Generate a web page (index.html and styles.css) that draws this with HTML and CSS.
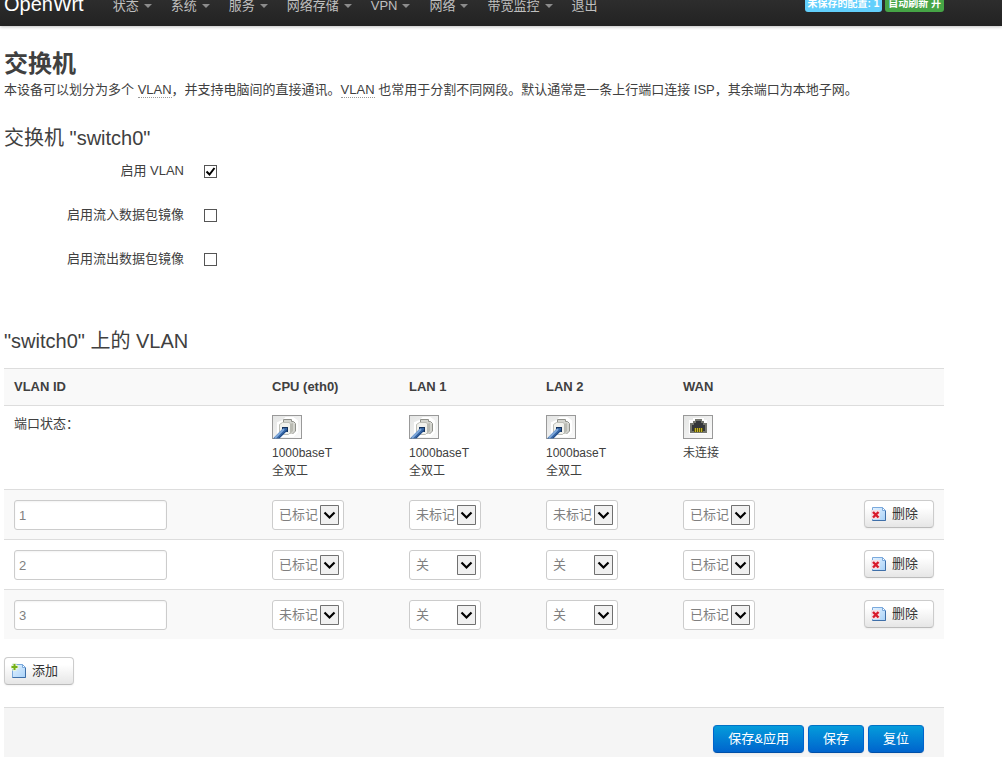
FILE: index.html
```html
<!DOCTYPE html>
<html lang="zh-CN">

<head>
  <meta charset="utf-8">
  <title>OpenWrt - 交换机</title>
  <link rel="stylesheet" href="styles.css">
</head>

<body>
  <svg class="sprite" width="0" height="0" aria-hidden="true">
    <defs>
      <linearGradient id="plate" x1="0" y1="0" x2="1" y2="1">
        <stop offset="0" stop-color="#e4e5e4" />
        <stop offset="1" stop-color="#fafafa" />
      </linearGradient>
      <linearGradient id="sheet" x1="0" y1="0" x2="1" y2="1">
        <stop offset="0" stop-color="#e4f2ff" />
        <stop offset="1" stop-color="#a9d2f8" />
      </linearGradient>
    </defs>
    <symbol id="port-up" viewBox="0 0 30 24">
      <rect x=".5" y=".5" width="29" height="23" fill="url(#plate)" stroke="#999" />
      <path d="M11 6l3-3h7l4 3v11l-4 4H9l-3-3V8z" fill="#fff" stroke="#fff" stroke-width="2" />
      <path d="M12 7V5h7l1 2h2l1 2v7l-3 3h-3z" fill="#d3d4ce" />
      <path d="M11.500 7V4.500h8v2h2l2 2V16l-3 3" fill="none" stroke="#8f908a" />
      <path d="M7.500 9.500l3-2h7l1 2v8l-2 2h-7l-2-2z" fill="#f1f1ec" stroke="#bdbeb7" />
      <path d="M18 9l3-1v8l-3 3z" fill="#b9bab2" />
      <rect x="10" y="12" width="6" height="5" fill="#14325c" />
      <path d="M1 23.500l9-9 2-1.500h3v3l-7.500 7.500z" fill="#3465a4" />
      <path d="M3 23l9-9" stroke="#7fa8da" stroke-width="2" />
      <path d="M7 23l8-8" stroke="#204a87" />
    </symbol>
    <symbol id="port-down" viewBox="0 0 30 24">
      <rect x=".5" y=".5" width="29" height="23" fill="url(#plate)" stroke="#999" />
      <path d="M6 5h4V3h11v2h3v14H6z" fill="#fff" />
      <path d="M7 8h3V6h2V4h7v2h2v2h3v10H7z" fill="#74766e" />
      <path d="M9 10h2V8h2V6h5v2h2v2h2v6H9z" fill="#34373a" />
      <path d="M11 13h9v4h-9z" fill="#5c560c" />
      <path d="M12.500 13v4M14.500 13v4M16.500 13v4M18.500 13v4" stroke="#c4b32a" />
    </symbol>
    <symbol id="del" viewBox="0 0 16 16">
      <path d="M1.500 1.500h10l3 3v10h-13z" fill="url(#sheet)" stroke="#7aa9dc" />
      <path d="M1.500 14.500h13v-10" fill="none" stroke="#3f6fa8" />
      <path d="M11.500 1.500v3h3z" fill="#fff" stroke="#7aa9dc" />
      <rect x="0" y="4" width="9" height="9" rx="1" fill="#f3e0e8" />
      <path d="M2 6l5.500 5.500M7.500 6L2 11.500" stroke="#d8192c" stroke-width="2.400" />
    </symbol>
    <symbol id="add" viewBox="0 0 16 16">
      <path d="M1.500 1.500h10l3 3v10h-13z" fill="url(#sheet)" stroke="#7aa9dc" />
      <path d="M1.500 14.500h13v-10" fill="none" stroke="#3f6fa8" />
      <path d="M11.500 1.500v3h3z" fill="#fff" stroke="#7aa9dc" />
      <path d="M3.500 0v8M0 4h7.500" stroke="#e9f5d8" stroke-width="4" />
      <path d="M3.500 1v6M.5 4h6" stroke="#73b017" stroke-width="2" />
    </symbol>
  </svg>

  <header class="topbar">
    <div class="container topbar-inner">
      <a class="brand" href="#">OpenWrt</a>
      <nav class="nav">
        <a class="menu" href="#">状态</a>
        <a class="menu" href="#">系统</a>
        <a class="menu" href="#">服务</a>
        <a class="menu" href="#">网络存储</a>
        <a class="menu" href="#">VPN</a>
        <a class="menu" href="#">网络</a>
        <a class="menu" href="#">带宽监控</a>
        <a href="#">退出</a>
      </nav>
      <div class="indicators">
        <a class="label notice" href="#">未保存的配置: 1</a>
        <a class="label success" href="#">自动刷新 开</a>
      </div>
    </div>
  </header>

  <main class="container">
    <form onsubmit="return false">
      <h2>交换机</h2>
      <p class="descr">本设备可以划分为多个 <abbr>VLAN</abbr>，并支持电脑间的直接通讯。<abbr>VLAN</abbr> 也常用于分割不同网段。默认通常是一条上行端口连接 ISP，其余端口为本地子网。</p>

      <section class="options">
        <h3>交换机 "switch0"</h3>
        <div class="field">
          <label for="enable-vlan">启用 VLAN</label>
          <input type="checkbox" id="enable-vlan" checked>
        </div>
        <div class="field">
          <label for="mirror-rx">启用流入数据包镜像</label>
          <input type="checkbox" id="mirror-rx">
        </div>
        <div class="field">
          <label for="mirror-tx">启用流出数据包镜像</label>
          <input type="checkbox" id="mirror-tx">
        </div>
      </section>

      <section>
        <h3>"switch0" 上的 VLAN</h3>
        <table class="vlans">
          <colgroup>
            <col class="col-id">
            <col class="col-port">
            <col class="col-port">
            <col class="col-port">
            <col class="col-port">
            <col>
          </colgroup>
          <thead>
            <tr>
              <th>VLAN ID</th>
              <th>CPU (eth0)</th>
              <th>LAN 1</th>
              <th>LAN 2</th>
              <th>WAN</th>
              <th></th>
            </tr>
          </thead>
          <tbody>
            <tr class="status">
              <td>端口状态：</td>
              <td><div class="port"><svg><use href="#port-up" /></svg>1000baseT<br>全双工</div></td>
              <td><div class="port"><svg><use href="#port-up" /></svg>1000baseT<br>全双工</div></td>
              <td><div class="port"><svg><use href="#port-up" /></svg>1000baseT<br>全双工</div></td>
              <td><div class="port"><svg><use href="#port-down" /></svg>未连接</div></td>
              <td></td>
            </tr>
            <tr>
              <td><input type="text" value="1" aria-label="VLAN ID"></td>
              <td><select aria-label="CPU (eth0)"><option>关</option><option>未标记</option><option selected>已标记</option></select></td>
              <td><select aria-label="LAN 1"><option>关</option><option selected>未标记</option><option>已标记</option></select></td>
              <td><select aria-label="LAN 2"><option>关</option><option selected>未标记</option><option>已标记</option></select></td>
              <td><select aria-label="WAN"><option>关</option><option>未标记</option><option selected>已标记</option></select></td>
              <td class="remove"><button class="btn" type="button"><svg><use href="#del" /></svg>删除</button></td>
            </tr>
            <tr>
              <td><input type="text" value="2" aria-label="VLAN ID"></td>
              <td><select aria-label="CPU (eth0)"><option>关</option><option>未标记</option><option selected>已标记</option></select></td>
              <td><select aria-label="LAN 1"><option selected>关</option><option>未标记</option><option>已标记</option></select></td>
              <td><select aria-label="LAN 2"><option selected>关</option><option>未标记</option><option>已标记</option></select></td>
              <td><select aria-label="WAN"><option>关</option><option>未标记</option><option selected>已标记</option></select></td>
              <td class="remove"><button class="btn" type="button"><svg><use href="#del" /></svg>删除</button></td>
            </tr>
            <tr>
              <td><input type="text" value="3" aria-label="VLAN ID"></td>
              <td><select aria-label="CPU (eth0)"><option>关</option><option selected>未标记</option><option>已标记</option></select></td>
              <td><select aria-label="LAN 1"><option selected>关</option><option>未标记</option><option>已标记</option></select></td>
              <td><select aria-label="LAN 2"><option selected>关</option><option>未标记</option><option>已标记</option></select></td>
              <td><select aria-label="WAN"><option>关</option><option>未标记</option><option selected>已标记</option></select></td>
              <td class="remove"><button class="btn" type="button"><svg><use href="#del" /></svg>删除</button></td>
            </tr>
          </tbody>
        </table>
        <button class="btn" type="button"><svg><use href="#add" /></svg>添加</button>
      </section>

      <div class="actions">
        <button class="btn primary" type="submit">保存&amp;应用</button>
        <button class="btn primary" type="submit">保存</button>
        <button class="btn primary" type="reset">复位</button>
      </div>
    </form>
  </main>
</body>

</html>
```
FILE: styles.css
```css
* {
  box-sizing: border-box;
}

body {
  margin: 0;
  background: #fff;
  color: #404040;
  font: 13px/18px "Liberation Sans", "Noto Sans CJK SC", sans-serif;
}

h2,
h3,
p {
  margin: 0;
}

input,
select,
button {
  font: inherit;
}

.sprite {
  display: block;
}

.container {
  max-width: 944px;
  padding-left: 4px;
}

/* top bar, partly scrolled out of view */
.topbar {
  height: 40px;
  margin-top: -14px;
  background: linear-gradient(#333, #222);
  box-shadow: 0 1px 3px rgba(0, 0, 0, .25);
}

.topbar-inner {
  display: flex;
  line-height: 20px;
}

.topbar a {
  text-decoration: none;
}

.brand {
  padding: 8px 19px 12px 0;
  color: #fff;
  font-size: 20px;
}

.nav {
  display: flex;
}

.nav a {
  padding: 10px;
  color: #bfbfbf;
}

.menu::after {
  content: "";
  display: inline-block;
  margin-left: 5px;
  border: 4px solid transparent;
  border-top-color: #8c8c8c;
  border-bottom: 0;
  margin-right: -1px;
  vertical-align: 2px;
}

.indicators {
  display: flex;
  align-self: flex-start;
  gap: 3px;
  margin-left: auto;
  padding-top: 9px;
}

.label {
  padding: 1px 3px;
  border-radius: 3px;
  color: #fff;
  font-size: 10px;
  font-weight: bold;
  line-height: 15px;
}

.notice {
  background: #62cffc;
}

.success {
  background: #46a546;
}

main {
  padding-top: 21px;
}

h2 {
  font-size: 24px;
  line-height: 34px;
}

h3 {
  font-size: 20px;
  font-weight: normal;
  line-height: 36px;
}

abbr {
  border-bottom: 1px dotted #999;
}

.options {
  margin: 21px 0 22px;
  padding-bottom: 13px;
}

.field {
  display: flex;
  align-items: center;
  gap: 20px;
  height: 44px;
  padding-bottom: 14px;
}

.field label {
  width: 180px;
  text-align: right;
}

input[type=checkbox] {
  appearance: none;
  width: 13px;
  height: 13px;
  margin: 0;
  border: 1px solid #555;
  background: #fff;
}

input[type=checkbox]:checked {
  background: url("data:image/svg+xml,%3Csvg xmlns='http://www.w3.org/2000/svg' width='11' height='11'%3E%3Cpath d='M1.500 5.500l3 3L9.500 2' fill='none' stroke='%23000' stroke-width='2'/%3E%3C/svg%3E");
}

.vlans {
  width: 100%;
  margin: 9px 0 18px;
  border-collapse: separate;
  border-spacing: 0;
  table-layout: fixed;
}

.col-id {
  width: 258px;
}

.col-port {
  width: 137px;
}

.vlans th,
.vlans td {
  padding: 9px 10px;
  border-top: 1px solid #ddd;
  text-align: left;
  vertical-align: top;
}

.vlans td {
  padding-top: 10px;
}

.vlans .status td {
  padding-top: 9px;
}

.vlans th,
.vlans tbody tr:nth-child(even) td {
  background: #f9f9f9;
}

.vlans .remove {
  text-align: right;
}

.port {
  font-size: 12px;
}

.port svg {
  display: block;
  width: 30px;
  height: 24px;
  margin-bottom: 5px;
}

input[type=text],
select {
  display: block;
  height: 30px;
  border: 1px solid #ccc;
  border-radius: 3px;
  color: #808080;
  background-color: #fff;
}

input[type=text] {
  width: 153px;
  padding: 4px;
  box-shadow: inset 0 1px 2px rgba(0, 0, 0, .05);
}

select {
  appearance: none;
  width: 72px;
  padding: 0 24px 0 6px;
  background-image: url("data:image/svg+xml,%3Csvg xmlns='http://www.w3.org/2000/svg' width='19' height='20'%3E%3Cpath d='M.5.5h18v19H.5z' fill='%23f0f0f0' stroke='%23707070'/%3E%3Cpath d='M4.500 7.500l5 5 5-5' fill='none' stroke='%23000' stroke-width='2.200'/%3E%3C/svg%3E");
  background-repeat: no-repeat;
  background-position: right 4px center;
}

.btn {
  display: inline-flex;
  align-items: center;
  height: 28px;
  padding: 0 15px 0 6px;
  border: 1px solid #ccc;
  border-bottom-color: #bbb;
  border-radius: 4px;
  background: linear-gradient(#fff, #fff 25%, #e6e6e6);
  box-shadow: 0 1px 2px rgba(0, 0, 0, .05);
  color: #333;
}

.btn svg {
  width: 16px;
  height: 16px;
  margin-right: 5px;
}

.actions {
  display: flex;
  justify-content: flex-end;
  gap: 4px;
  margin-top: 22px;
  padding: 17px 20px 18px;
  border-top: 1px solid #ddd;
  background: #f5f5f5;
}

.primary {
  padding: 0 14px;
  border-color: #0072c6 #0064cd #0050a8;
  background: linear-gradient(#049cdb, #0064cd);
  color: #fff;
}
```
